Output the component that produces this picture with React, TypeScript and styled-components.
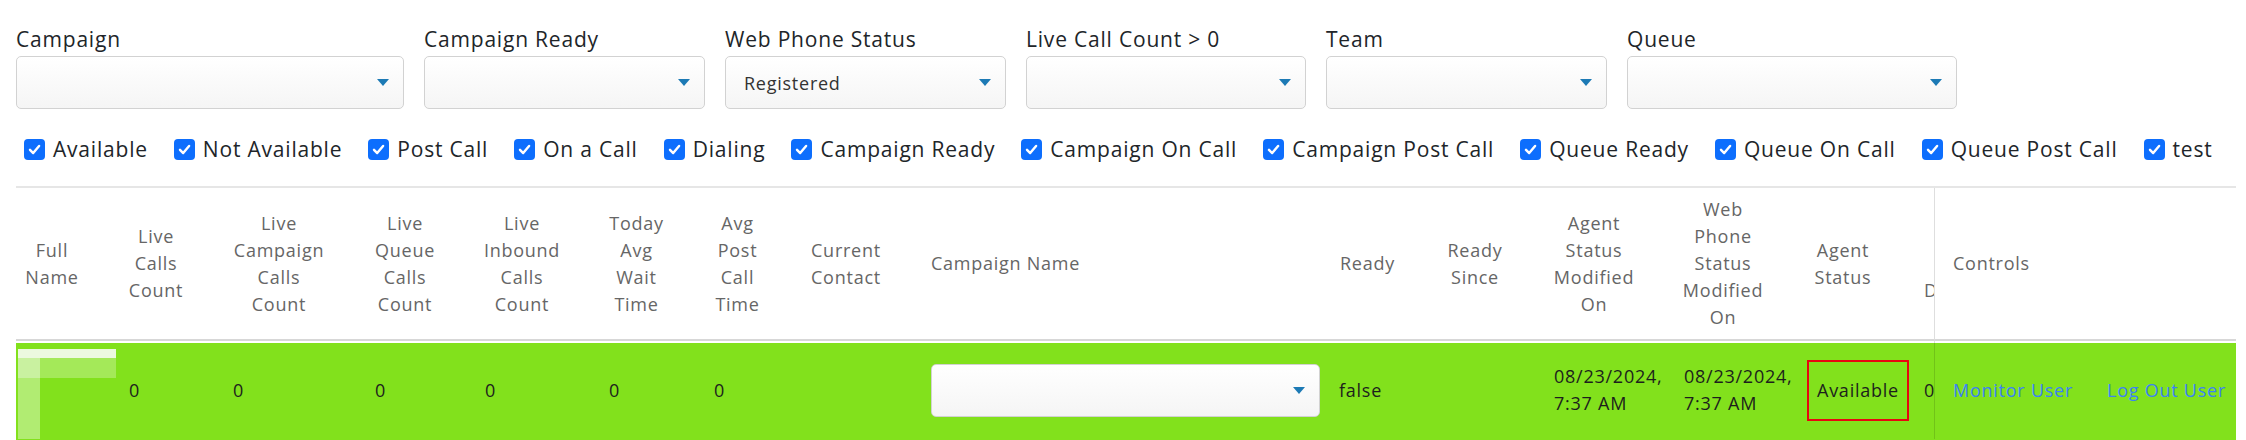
import React from "react";
import styled, { createGlobalStyle } from "styled-components";

const GlobalStyle = createGlobalStyle`
  html, body {
    margin: 0;
    padding: 0;
    background: #ffffff;
  }
  body {
    font-family: "Open Sans", "Noto Sans", Arial, sans-serif;
    color: #212529;
    -webkit-font-smoothing: antialiased;
  }
  * { box-sizing: border-box; }
`;

/* ---------- page frame ---------- */

const Page = styled.div`
  width: 2246px;
  padding: 23px 10px 0 16px;
  overflow: hidden;
`;

/* ---------- filter selects ---------- */

const FilterBar = styled.div`
  display: flex;
  gap: 20px;
`;

const Filter = styled.div<{ $width: number }>`
  display: flex;
  flex-direction: column;
  width: ${(p) => p.$width}px;
  flex: none;
`;

const FilterLabel = styled.label`
  display: block;
  height: 32px;
  font-size: 21px;
  line-height: 32px;
  letter-spacing: 0.8px;
  color: #212529;
  white-space: nowrap;
`;

const SelectBox = styled.div<{ $width?: number }>`
  display: flex;
  align-items: center;
  justify-content: space-between;
  width: ${(p) => (p.$width ? `${p.$width}px` : "100%")};
  flex: none;
  height: 53px;
  margin-top: 1px;
  padding: 0 14px 0 18px;
  border: 1px solid #d2d2d2;
  border-radius: 5px;
  background: linear-gradient(#ffffff, #f5f5f5);
`;

const SelectValue = styled.span`
  font-size: 18px;
  letter-spacing: 0.75px;
  color: #333333;
  white-space: nowrap;
`;

const Caret = styled.span`
  width: 0;
  height: 0;
  border-left: 6px solid transparent;
  border-right: 6px solid transparent;
  border-top: 7px solid #1d7ab5;
  flex: none;
`;

/* ---------- status checkboxes ---------- */

const CheckRow = styled.div`
  display: flex;
  align-items: center;
  gap: 26px;
  height: 32px;
  margin-top: 24px;
  padding-left: 8px;
`;

const CheckItem = styled.label`
  display: flex;
  align-items: center;
  gap: 8px;
  white-space: nowrap;
`;

const CheckMark = styled.span`
  display: inline-flex;
  align-items: center;
  justify-content: center;
  width: 21px;
  height: 21px;
  border-radius: 4px;
  background: #0d6efd;
  flex: none;
`;

const CheckText = styled.span`
  font-size: 21px;
  line-height: 32px;
  letter-spacing: 0.8px;
  color: #212529;
`;

/* ---------- agents table ---------- */

const HEAD_HEIGHT = 153;
const ROW_GREEN = "#82e11c";

const Grid = styled.div<{ $cols: string }>`
  display: grid;
  grid-template-columns: ${(p) => p.$cols};
  grid-template-rows: ${HEAD_HEIGHT}px 98px;
  margin-top: 21px;
  padding-bottom: 8px;
  border-top: 2px solid #e6e6e6;
  background: linear-gradient(#ffffff 0 ${HEAD_HEIGHT + 2}px, ${ROW_GREEN} ${HEAD_HEIGHT + 2}px);
  font-size: 18px;
  letter-spacing: 0.75px;
`;

const HeadCell = styled.div<{ $align: "center" | "left"; $pad: string; $clip?: boolean }>`
  display: flex;
  align-items: center;
  justify-content: ${(p) => (p.$align === "left" ? "flex-start" : "center")};
  min-width: 0;
  padding: ${(p) => p.$pad};
  overflow: ${(p) => (p.$clip ? "hidden" : "visible")};
  border-bottom: 2px solid #d7d7d7;
  color: #666666;
  line-height: 27px;
`;

const HeadLines = styled.span<{ $align: "center" | "left" }>`
  display: inline-flex;
  flex-direction: column;
  align-items: ${(p) => (p.$align === "left" ? "flex-start" : "center")};
  white-space: nowrap;
  flex: none;
`;

const BodyCell = styled.div<{ $pad: string; $clip?: boolean; $top?: boolean }>`
  display: flex;
  align-items: ${(p) => (p.$top ? "flex-start" : "center")};
  min-width: 0;
  padding: ${(p) => p.$pad};
  overflow: ${(p) => (p.$clip ? "hidden" : "visible")};
  color: #1d1f1c;
  line-height: 27px;
  white-space: nowrap;
`;

const ControlsHead = styled(HeadCell)`
  border-left: 1px solid rgba(0, 0, 0, 0.13);
`;

const ControlsCell = styled(BodyCell)`
  gap: 34px;
  border-left: 1px solid rgba(0, 0, 0, 0.13);
`;

const Stacked = styled.span`
  display: flex;
  flex-direction: column;
`;

const StatusBadge = styled.span`
  display: inline-block;
  margin-left: -5px;
  padding: 15px 8px;
  border: 2px solid #e8060f;
  line-height: 27px;
`;

const ActionLink = styled.a`
  color: #3b82f6;
  text-decoration: none;
  cursor: pointer;
`;

const Avatar = styled.svg`
  display: block;
  margin: 8px 0 0 2px;
  flex: none;
`;

type Column = {
  title: string;
  width: number;
  align?: "center" | "left";
  headPad?: string;
  bodyPad?: string;
  clip?: boolean;
  oneLine?: boolean;
};

const columns: Column[] = [
  { title: "Full Name", width: 88, headPad: "0 16px 0 0", bodyPad: "0" },
  { title: "Live Calls Count", width: 104 },
  { title: "Live Campaign Calls Count", width: 142 },
  { title: "Live Queue Calls Count", width: 110 },
  { title: "Live Inbound Calls Count", width: 124 },
  { title: "Today Avg Wait Time", width: 105 },
  { title: "Avg Post Call Time", width: 97 },
  { title: "Current Contact", width: 120 },
  { title: "Campaign Name", width: 408, align: "left", oneLine: true },
  { title: "Ready", width: 107 },
  { title: "Ready Since", width: 108 },
  { title: "Agent Status Modified On", width: 130 },
  { title: "Web Phone Status Modified On", width: 128 },
  { title: "Agent Status", width: 112 },
  { title: "Last Call Duration", width: 35, align: "left", headPad: "0 0 0 25px", bodyPad: "0 0 0 25px", clip: true },
];

const CONTROLS_WIDTH = 302;

const filters = [
  { label: "Campaign", width: 388 },
  { label: "Campaign Ready", width: 281 },
  { label: "Web Phone Status", width: 281, value: "Registered" },
  { label: "Live Call Count > 0", width: 280 },
  { label: "Team", width: 281 },
  { label: "Queue", width: 330 },
];

const statuses = [
  "Available",
  "Not Available",
  "Post Call",
  "On a Call",
  "Dialing",
  "Campaign Ready",
  "Campaign On Call",
  "Campaign Post Call",
  "Queue Ready",
  "Queue On Call",
  "Queue Post Call",
  "test",
];

const agent = {
  live: "0",
  campaign: "0",
  queue: "0",
  inbound: "0",
  wait: "0",
  postCall: "0",
  ready: "false",
  statusModified: ["08/23/2024,", "7:37 AM"],
  phoneModified: ["08/23/2024,", "7:37 AM"],
  status: "Available",
  duration: "0",
};

function Check() {
  return (
    <CheckMark>
      <svg width="15" height="15" viewBox="0 0 16 16" fill="none">
        <path d="M3.2 8.4 L6.6 11.8 L12.9 4.3" stroke="#ffffff" strokeWidth="2.6" strokeLinecap="round" strokeLinejoin="round" />
      </svg>
    </CheckMark>
  );
}

function AvatarPlaceholder() {
  return (
    <Avatar width="98" height="90" viewBox="0 0 98 90">
      <rect x="0" y="0" width="98" height="9" fill="#ecf9df" />
      <rect x="0" y="9" width="98" height="20" fill="#a4e959" />
      <rect x="0" y="9" width="22" height="20" fill="#c9f1a0" />
      <rect x="0" y="29" width="22" height="61" fill="#b1ec72" />
    </Avatar>
  );
}

export default function App() {
  const cols = [...columns.map((c) => `${c.width}px`), `${CONTROLS_WIDTH}px`].join(" ");
  const pad = (c: Column, kind: "head" | "body") =>
    (kind === "head" ? c.headPad : c.bodyPad) ?? "0 25px";

  const bodyContent: React.ReactNode[] = [
    <AvatarPlaceholder key="avatar" />,
    agent.live,
    agent.campaign,
    agent.queue,
    agent.inbound,
    agent.wait,
    agent.postCall,
    "",
    <SelectBox key="campaign" $width={389}>
      <span />
      <Caret />
    </SelectBox>,
    agent.ready,
    "",
    <Stacked key="sm">
      {agent.statusModified.map((l) => (
        <span key={l}>{l}</span>
      ))}
    </Stacked>,
    <Stacked key="pm">
      {agent.phoneModified.map((l) => (
        <span key={l}>{l}</span>
      ))}
    </Stacked>,
    <StatusBadge key="status">{agent.status}</StatusBadge>,
    agent.duration,
  ];

  return (
    <>
      <GlobalStyle />
      <Page>
        <FilterBar>
          {filters.map((f) => (
            <Filter key={f.label} $width={f.width}>
              <FilterLabel>{f.label}</FilterLabel>
              <SelectBox>
                <SelectValue>{f.value ?? ""}</SelectValue>
                <Caret />
              </SelectBox>
            </Filter>
          ))}
        </FilterBar>

        <CheckRow>
          {statuses.map((s) => (
            <CheckItem key={s}>
              <Check />
              <CheckText>{s}</CheckText>
            </CheckItem>
          ))}
        </CheckRow>

        <Grid $cols={cols}>
          {columns.map((c) => (
            <HeadCell key={c.title} $align={c.align ?? "center"} $pad={pad(c, "head")} $clip={c.clip}>
              <HeadLines $align={c.clip ? "center" : c.align ?? "center"}>
                {(c.oneLine ? [c.title] : c.title.split(" ")).map((w, i) => (
                  <span key={i}>{w}</span>
                ))}
              </HeadLines>
            </HeadCell>
          ))}
          <ControlsHead $align="left" $pad="0 0 0 18px">
            Controls
          </ControlsHead>

          {columns.map((c, i) => (
            <BodyCell key={c.title} $pad={pad(c, "body")} $clip={c.clip} $top={i === 0}>
              {bodyContent[i]}
            </BodyCell>
          ))}
          <ControlsCell $pad="0 0 0 18px">
            <ActionLink>Monitor User</ActionLink>
            <ActionLink>Log Out User</ActionLink>
          </ControlsCell>
        </Grid>
      </Page>
    </>
  );
}
